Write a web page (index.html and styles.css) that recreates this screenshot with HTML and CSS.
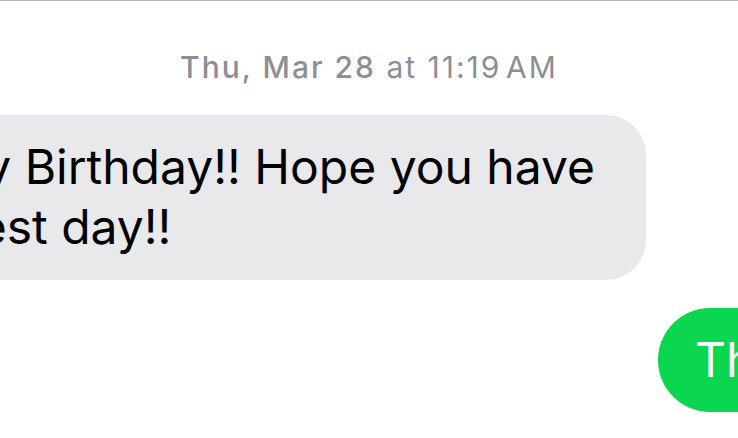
FILE: index.html
```html
<!DOCTYPE html>
<html lang="en">
<head>
    <meta charset="UTF-8">
    <meta name="viewport" content="width=device-width, initial-scale=1.0">
    <title>Messages</title>
    <link rel="stylesheet" href="styles.css">
</head>
<body>
    <div class="thread">
        <!-- Время отправки -->
        <p class="stamp"><span class="stamp-day">Thu, Mar 28</span> at 11:19&#8202;AM</p>

        <!-- Входящее сообщение -->
        <div class="row row-in">
            <div class="bubble bubble-in">Happy Birthday!! Hope you have<br>the best day!!</div>
        </div>

        <!-- Исходящее сообщение -->
        <div class="row row-out">
            <div class="bubble bubble-out">Thanks!! It was a great day</div>
        </div>
    </div>
</body>
</html>
```

FILE: styles.css
```css
body {
    margin: 0;
    padding: 0;
    background-color: #ffffff;
    font-family: Inter, "Liberation Sans", sans-serif;
    overflow: hidden;
    width: 738px;
    height: 438px;
}

.thread {
    border-top: 1px solid #b4b4b4;
    display: flex;
    flex-direction: column;
}

.stamp {
    margin: 0;
    padding-top: 46px;
    text-align: center;
    color: #8e8e93;
    font-size: 30px;
    line-height: 40px;
    letter-spacing: 2px;
}

.stamp-day {
    font-weight: 500;
}

.row {
    display: flex;
    white-space: nowrap;
}

.row-in {
    justify-content: flex-end;
    padding-right: 92px;
    margin-top: 28px;
}

.row-out {
    justify-content: flex-start;
    padding-left: 658px;
    margin-top: 28px;
}

.bubble {
    font-size: 48px;
    line-height: 60px;
    padding: 22px 51px 23px 37px;
    border-radius: 40px;
    flex-shrink: 0;
}

.bubble-in {
    background-color: #e9e9eb;
    color: #000000;
}

.bubble-out {
    background-color: #0bd64f;
    color: #ffffff;
    border-radius: 52px;
    padding-bottom: 22px;
}
```
